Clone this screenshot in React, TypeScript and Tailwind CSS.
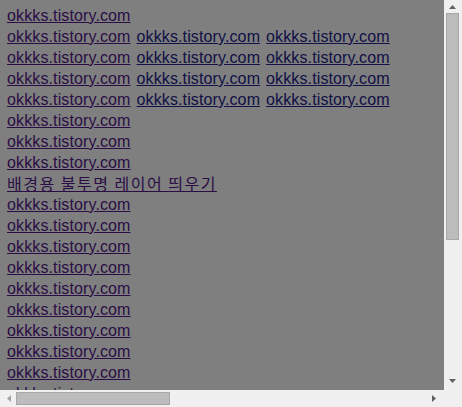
import React from 'react';

const LINK = 'okkks.tistory.com';

// which links on each row are still unvisited (blue)
const rows: { text: string; fresh?: number[] }[] = [
  { text: LINK },
  { text: LINK, fresh: [1, 2] },
  { text: LINK, fresh: [1, 2] },
  { text: LINK, fresh: [1, 2] },
  { text: LINK, fresh: [1, 2] },
  { text: LINK },
  { text: LINK },
  { text: LINK },
  { text: '배경용 불투명 레이어 띄우기' },
  ...Array.from({ length: 12 }, () => ({ text: LINK })),
];

const Arrow: React.FC<{ dir: 'up' | 'down' | 'left' | 'right'; dim?: boolean }> = ({ dir, dim }) => {
  const pts = {
    up: '0,4 3.5,0 7,4',
    down: '0,0 7,0 3.5,4',
    left: '4,0 4,7 0,3.5',
    right: '0,0 4,3.5 0,7',
  }[dir];
  const vertical = dir === 'up' || dir === 'down';
  return (
    <svg width={vertical ? 7 : 4} height={vertical ? 4 : 7} viewBox={vertical ? '0 0 7 4' : '0 0 4 7'}>
      <polygon points={pts} fill={dim ? '#a3a3a3' : '#606060'} />
    </svg>
  );
};

const App: React.FC = () => {
  return (
    <div className="w-[462px] h-[407px] overflow-hidden bg-[#f0f0f0] flex flex-col">
      <div className="flex h-[390px]">
        {/* page content under the dim layer */}
        <div className="relative w-[444px] h-[390px] overflow-hidden bg-white">
          <div className="pl-[7px] pt-[5px] text-[16px] leading-[21px] font-['Liberation_Sans','Noto_Sans_CJK_KR',sans-serif] whitespace-nowrap">
            {rows.map((row, i) => {
              const count = row.fresh ? 3 : 1;
              return (
                <div key={i} className="flex gap-[6px]">
                  {Array.from({ length: count }, (_, j) => (
                    <a
                      key={j}
                      href="#"
                      className={`underline ${
                        row.fresh?.includes(j) ? 'text-[#24248c]' : 'text-[#551a8b]'
                      } ${
                        row.text === LINK
                          ? 'tracking-[0.12px]'
                          : "font-['Noto_Sans_CJK_KR',sans-serif] tracking-[1.5px]"
                      }`}
                    >
                      {row.text}
                    </a>
                  ))}
                </div>
              );
            })}
          </div>
          {/* semi-transparent background layer */}
          <div className="absolute inset-0 bg-black/50" />
        </div>

        {/* vertical scrollbar */}
        <div className="w-[18px] flex flex-col items-center bg-[#f0f0f0]">
          <div className="h-[13px] flex items-center justify-center pr-[1px]">
            <Arrow dir="up" />
          </div>
          <div className="flex-1 w-full pl-[2px] pr-[3px]">
            <div className="h-[227px] bg-[#bcbcbc] border border-[#a8a8a8]" />
          </div>
          <div className="h-[17px] flex items-center justify-center pr-[1px] pb-[2px]">
            <Arrow dir="down" />
          </div>
        </div>
      </div>

      {/* horizontal scrollbar */}
      <div className="flex h-[17px]">
        <div className="w-[444px] flex items-center">
          <div className="w-[16px] flex justify-center pl-[1px]">
            <Arrow dir="left" dim />
          </div>
          <div className="flex-1 h-full py-[2px]">
            <div className="w-[154px] h-full bg-[#bcbcbc] border border-[#a8a8a8]" />
          </div>
          <div className="w-[16px] flex justify-center pr-[5px]">
            <Arrow dir="right" />
          </div>
        </div>
        <div className="w-[18px] bg-[#f0f0f0]" />
      </div>
    </div>
  );
};

export default App;
